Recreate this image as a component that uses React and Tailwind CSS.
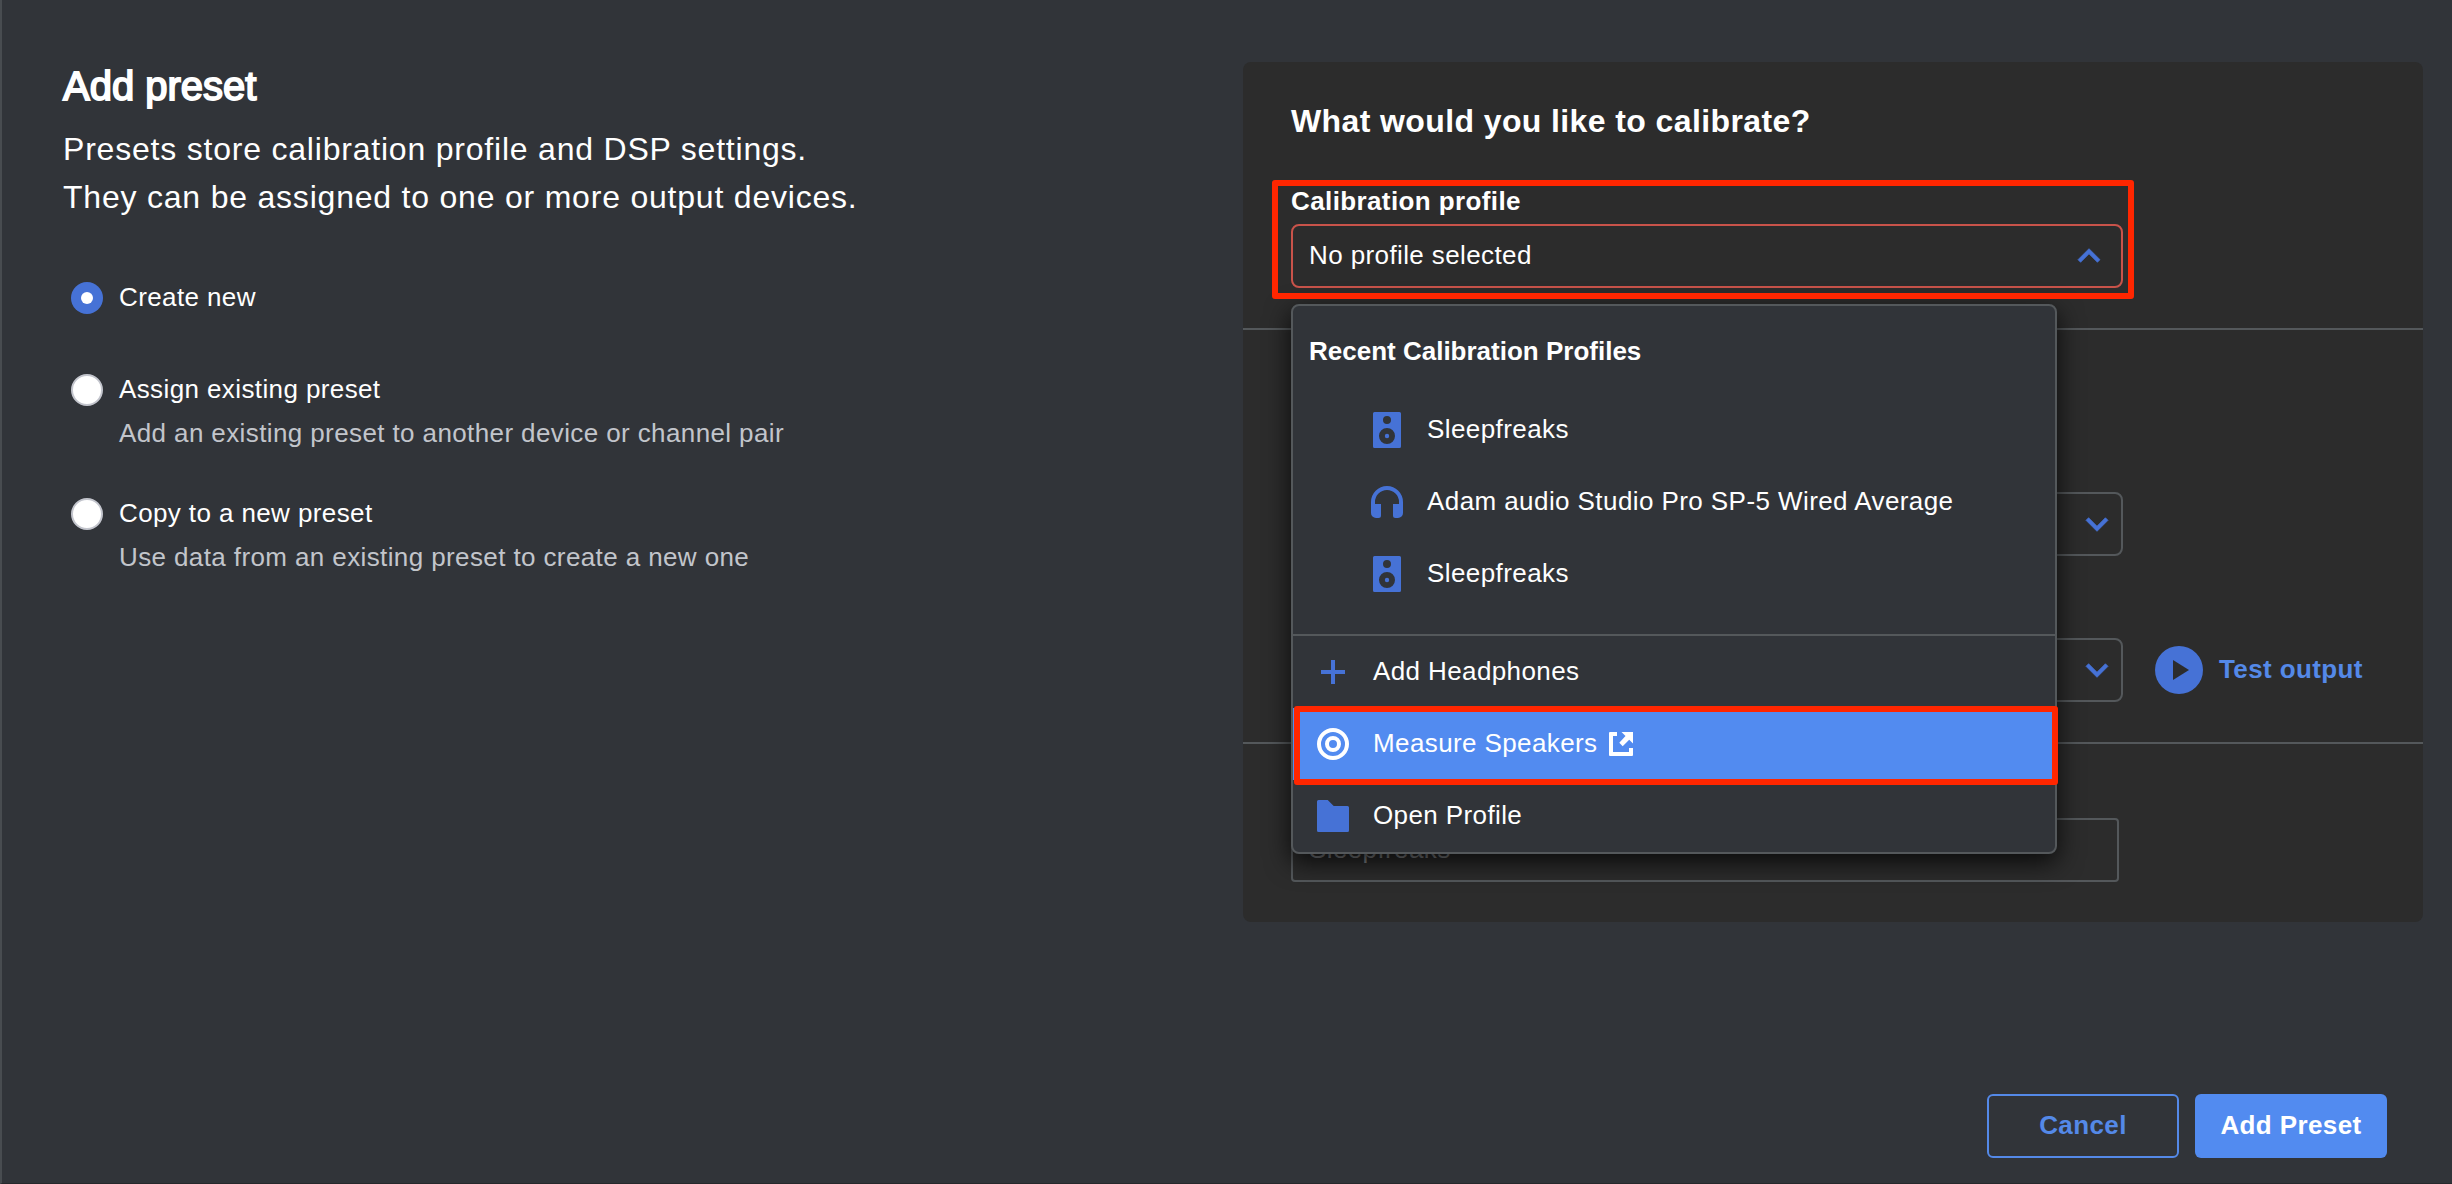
import { useState } from 'react';

const presetModes = [
    { key: 'create', label: 'Create new' },
    { key: 'assign', label: 'Assign existing preset', hint: 'Add an existing preset to another device or channel pair' },
    { key: 'copy', label: 'Copy to a new preset', hint: 'Use data from an existing preset to create a new one' },
];

const recentProfiles = [
    { id: 1, name: 'Sleepfreaks', icon: SpeakerIcon },
    { id: 2, name: 'Adam audio Studio Pro SP-5 Wired Average', icon: HeadphonesIcon },
    { id: 3, name: 'Sleepfreaks', icon: SpeakerIcon },
];

function SpeakerIcon() {
    return (
        <svg viewBox="0 0 32 36" className="w-8 h-9" fill="#4672d6">
            <path
                fillRule="evenodd"
                d="M3.5 0h25A1.500 1.500 0 0 1 30 1.500v33a1.500 1.500 0 0 1-1.500 1.500h-25A1.500 1.500 0 0 1 2 34.500v-33A1.500 1.500 0 0 1 3.500 0zM16 4a4 4 0 1 0 0 8 4 4 0 0 0 0-8zM16 16a8 8 0 1 0 0 16 8 8 0 0 0 0-16z"
            />
            <circle cx="16" cy="24" r="2.200" />
        </svg>
    );
}

function HeadphonesIcon() {
    return (
        <svg viewBox="0 0 32 32" className="w-8 h-8" fill="#4672d6">
            <path d="M0 16a16 16 0 0 1 32 0v11a5 5 0 0 1-5 5h-2.500a2.500 2.500 0 0 1-2.500-2.500V18h6v-2a12 12 0 0 0-24 0v2h6v11.500a2.500 2.500 0 0 1-2.500 2.500H5a5 5 0 0 1-5-5z" />
        </svg>
    );
}

function PlusIcon() {
    return (
        <svg viewBox="0 0 32 32" className="w-8 h-8" fill="#4672d6">
            <path d="M14 4h4v10h10v4H18v10h-4V18H4v-4h10z" />
        </svg>
    );
}

function TargetIcon() {
    return (
        <svg viewBox="0 0 32 32" className="w-8 h-8" fill="none" stroke="#fff" strokeWidth="4">
            <circle cx="16" cy="16" r="14" />
            <circle cx="16" cy="16" r="6" />
        </svg>
    );
}

function FolderIcon() {
    return (
        <svg viewBox="0 0 32 32" className="w-8 h-8" fill="#4672d6">
            <path d="M1.500 0h9.200l6 6h13.800A1.500 1.500 0 0 1 32 7.500v23a1.500 1.500 0 0 1-1.500 1.500h-29A1.500 1.500 0 0 1 0 30.500v-29A1.500 1.500 0 0 1 1.500 0z" />
        </svg>
    );
}

function ExternalIcon() {
    return (
        <svg viewBox="0 0 24 24" className="w-6 h-6" fill="#fff">
            <path d="M1 0h7v4H4v16h16v-4h4v7a1 1 0 0 1-1 1H1a1 1 0 0 1-1-1V1a1 1 0 0 1 1-1z" />
            <path d="M12.500 0H24v11.500l-3.800-3.800-6.500 6.500-3.400-3.400 6.200-6.800z" />
        </svg>
    );
}

function Chevron({ up }) {
    return (
        <svg viewBox="0 0 24 24" className="w-11 h-11" fill="#4672d6" stroke="#4672d6" strokeWidth="0.4">
            {up ? (
                <path d="M12 8l-6 6 1.410 1.410L12 10.830l4.590 4.580L18 14z" />
            ) : (
                <path d="M7.410 8.590L12 13.170l4.590-4.580L18 10l-6 6-6-6z" />
            )}
        </svg>
    );
}

function MenuRow({ icon, children, active }) {
    return (
        <div className={`relative flex items-center h-[72px] pl-6 ${active ? 'bg-[#528bf0]' : ''}`}>
            {icon}
            <span className="pl-6 pb-0.5">{children}</span>
            {active && (
                <>
                    <span className="ml-3"><ExternalIcon /></span>
                    <div className="absolute left-px -top-0.5 w-[764px] h-[79px] border-6 border-[#ff2600] rounded-[3px]" />
                </>
            )}
        </div>
    );
}

function ProfileMenu() {
    return (
        <div className="absolute left-0 top-20 z-10 w-[766px] h-[550px] rounded-lg border-2 border-[#54585b] bg-[#313439] shadow-[0_8px_26px_0_rgba(0,0,0,0.8)]">
            <div className="h-[328px]">
                <p className="pt-[29px] pl-4 font-bold leading-8 tracking-normal">Recent Calibration Profiles</p>
                <div className="pt-[27px]">
                    {recentProfiles.map(({ id, name, icon: Icon }) => (
                        <div key={id} className="flex items-center h-[72px] pl-[78px]">
                            <Icon />
                            <span className="pl-6 pb-0.5 tracking-[0.42px]">{name}</span>
                        </div>
                    ))}
                </div>
            </div>
            <div className="border-t-2 border-[#54585b]">
                <MenuRow icon={<PlusIcon />}>Add Headphones</MenuRow>
                <MenuRow icon={<TargetIcon />} active>Measure Speakers</MenuRow>
                <MenuRow icon={<FolderIcon />}>Open Profile</MenuRow>
            </div>
        </div>
    );
}

export default function App() {
    const [mode, setMode] = useState('create');

    return (
        <div className="flex flex-col w-[2452px] h-[1184px] overflow-hidden border-l-2 border-l-[#484c50] border-b border-b-[#26282b] bg-[#313439] text-white text-[26px] leading-8 tracking-[0.39px] font-['Liberation_Sans',Arial,sans-serif]">
            <div className="flex justify-between pt-[62px] pl-[61px] pr-[29px]">
                {/* Preset mode */}
                <div>
                    <h1 className="text-[40px] leading-12 tracking-normal [-webkit-text-stroke:1.8px_white]">Add preset</h1>
                    <p className="mt-[15px] text-[32px] leading-12 tracking-[0.79px]">
                        Presets store calibration profile and DSP settings.<br />
                        They can be assigned to one or more output devices.
                    </p>
                    <div className="mt-[61px] pl-2">
                        {presetModes.map(m => (
                            <div key={m.key} onClick={() => setMode(m.key)} className={m.hint ? 'mb-[50px]' : 'mb-[60px]'}>
                                <div className="flex gap-4 h-8">
                                    {mode === m.key ? (
                                        <span className="flex items-center justify-center w-8 h-8 rounded-full bg-[#4672d6]">
                                            <span className="w-3 h-3 rounded-full bg-white" />
                                        </span>
                                    ) : (
                                        <span className="w-8 h-8 rounded-full bg-white border-2 border-[#c3c5cd]" />
                                    )}
                                    <span className="leading-[30px]">{m.label}</span>
                                </div>
                                {m.hint && <p className="mt-3 pl-12 leading-[30px] text-[#c2c5cb]">{m.hint}</p>}
                            </div>
                        ))}
                    </div>
                </div>

                {/* Calibration panel */}
                <div className="w-[1180px] h-[860px] rounded-lg bg-[#2c2c2c]">
                    <div className="h-[268px] pt-[39px] pl-12 border-b-2 border-[#54585b]">
                        <h2 className="text-[32px] leading-10 font-bold">What would you like to calibrate?</h2>
                        <div className="relative mt-11 w-[832px]">
                            <p className="font-bold">Calibration profile</p>
                            <div className="relative mt-[7px]">
                                <div className="flex items-center justify-between h-16 pl-4 pr-[10px] rounded-lg border-2 border-[#c9534a]">
                                    <span className="pb-0.5">No profile selected</span>
                                    <Chevron up />
                                </div>
                                <ProfileMenu />
                            </div>
                            <div className="absolute z-20 -left-[19px] -top-[5px] w-[862px] h-[119px] border-6 border-[#ff2600] rounded-[3px]" />
                        </div>
                    </div>

                    <div className="h-[414px] pt-[162px] pl-12 border-b-2 border-[#54585b]">
                        <div className="flex items-center justify-end w-[832px] h-16 pr-0.5 rounded-lg border-2 border-[#54585b]">
                            <Chevron />
                        </div>
                        <div className="flex items-center mt-[82px]">
                            <div className="flex items-center justify-end w-[832px] h-16 pr-0.5 rounded-lg border-2 border-[#54585b]">
                                <Chevron />
                            </div>
                            <button className="flex items-center gap-4 ml-8 font-bold text-[#5489e8]">
                                <svg viewBox="0 0 48 48" className="w-12 h-12">
                                    <circle cx="24" cy="24" r="24" fill="#4672d6" />
                                    <path d="M18 14l16 10-16 10z" fill="#2c2c2c" />
                                </svg>
                                <span className="pb-0.5">Test output</span>
                            </button>
                        </div>
                    </div>

                    <div className="pt-[74px] pl-12">
                        <div className="flex items-center w-[828px] h-16 pl-4 rounded-sm border-2 border-[#54585b] text-[#85878a]">
                            <span className="pb-0.5">Sleepfreaks</span>
                        </div>
                    </div>
                </div>
            </div>

            {/* Footer */}
            <div className="flex justify-end gap-4 mt-auto pb-[25px] pr-[65px]">
                <button className="w-48 h-16 pb-0.5 rounded-md border-2 border-[#5489e8] font-bold text-[#5489e8]">Cancel</button>
                <button className="w-48 h-16 pb-0.5 rounded-md bg-[#528bf0] font-bold">Add Preset</button>
            </div>
        </div>
    );
}
